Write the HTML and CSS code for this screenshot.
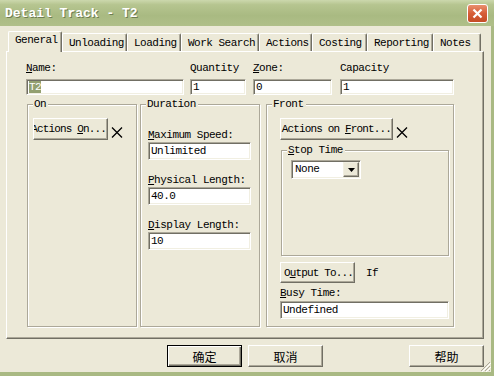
FILE: index.html
```html
<!DOCTYPE html>
<html lang="en">
	<head>
		<meta charset="UTF-8" />
		<title>Detail Track - T2</title>
		<link rel="stylesheet" href="styles.css">
	</head>
	<body>
		<div class="window">
			<div class="titlebar">
				<span class="title">Detail Track - T2</span>
				<span class="close">
					<svg width="11" height="11" viewBox="0 0 11 11">
						<path d="M1.5 1.5L9.5 9.5M9.5 1.5L1.5 9.5" stroke="#fff" stroke-width="2.2" />
					</svg>
				</span>
			</div>
			<div class="client">
				<div class="tabs">
					<div class="tab active">General</div>
					<div class="tab">Unloading</div>
					<div class="tab">Loading</div>
					<div class="tab">Work Search</div>
					<div class="tab">Actions</div>
					<div class="tab">Costing</div>
					<div class="tab">Reporting</div>
					<div class="tab">Notes</div>
				</div>
				<div class="panel">
					<div class="fields">
						<div class="field field-name">
							<div class="label"><u>N</u>ame:</div>
							<div class="edit"><span class="sel">T2</span></div>
						</div>
						<div class="field field-qty">
							<div class="label">Quantity</div>
							<div class="edit">1</div>
						</div>
						<div class="field field-zone">
							<div class="label"><u>Z</u>one:</div>
							<div class="edit">0</div>
						</div>
						<div class="field field-cap">
							<div class="label">Capacity</div>
							<div class="edit">1</div>
						</div>
					</div>

					<div class="groups">
						<fieldset class="group group-on">
							<legend>On</legend>
							<div class="action-row on-body">
								<div class="btn btn-clip btn-on"><span>Actions <u>O</u>n...</span></div>
								<svg class="xmark" width="12" height="11" viewBox="0 0 12 11">
									<path d="M1 0.5L11 10.5M11 0.5L1 10.5" stroke="#000" stroke-width="1.3" />
								</svg>
							</div>
						</fieldset>

						<fieldset class="group group-duration">
							<legend>Duration</legend>
							<div class="stack">
								<div class="label"><u>M</u>aximum Speed:</div>
								<div class="edit">Unlimited</div>
								<div class="label"><u>P</u>hysical Length:</div>
								<div class="edit">40.0</div>
								<div class="label"><u>D</u>isplay Length:</div>
								<div class="edit">10</div>
							</div>
						</fieldset>

						<fieldset class="group group-front">
							<legend>Front</legend>
							<div class="front-body">
								<div class="action-row">
									<div class="btn btn-clip btn-front"><span>Actions on <u>F</u>ront...</span></div>
									<svg class="xmark" width="12" height="11" viewBox="0 0 12 11">
										<path d="M1 0.5L11 10.5M11 0.5L1 10.5" stroke="#000" stroke-width="1.3" />
									</svg>
								</div>
								<fieldset class="group group-stop">
									<legend><u>S</u>top Time</legend>
									<div class="stop-body">
										<div class="select">
											<span class="select-value">None</span>
											<span class="select-arrow">
												<svg width="7" height="4" viewBox="0 0 7 4"><path d="M0 0H7L3.5 4Z" fill="#000" /></svg>
											</span>
										</div>
									</div>
								</fieldset>
								<div class="output-row">
									<div class="btn btn-clip btn-output"><span>O<u>u</u>tput To...</span></div>
									<span class="if">If</span>
								</div>
								<div class="label busy-label"><u>B</u>usy Time:</div>
								<div class="edit busy-edit">Undefined</div>
							</div>
						</fieldset>
					</div>
				</div>

				<div class="footer">
					<div class="btn btn-footer btn-default">确定</div>
					<div class="btn btn-footer">取消</div>
					<div class="btn btn-footer btn-help">帮助</div>
				</div>

				<svg class="grip" width="12" height="12" viewBox="0 0 12 12">
					<path d="M11 2L2 11M11 6L6 11M11 10L10 11" stroke="#aca899" stroke-width="1" />
					<path d="M12 3L3 12M12 7L7 12" stroke="#fff" stroke-width="1" />
				</svg>
			</div>
		</div>
	</body>
</html>
```

FILE: styles.css
```css
body {
	margin: 0;
	background: #ece9d8;
	font-family: "Liberation Mono", "DejaVu Sans Mono", monospace;
	font-size: 11px;
	letter-spacing: -0.5px;
	color: #000;
}

.window {
	width: 494px;
	height: 376px;
	display: flex;
	flex-direction: column;
}

.titlebar {
	flex: none;
	height: 26px;
	box-sizing: border-box;
	display: flex;
	align-items: center;
	justify-content: space-between;
	padding: 0 6px 0 5px;
	background: linear-gradient(to bottom, #ccd8ad 0%, #b6c590 18%, #a9ba82 60%, #b0bf89 100%);
}

.title {
	font-weight: bold;
	font-size: 13px;
	letter-spacing: 0;
	color: #fff;
	text-shadow: 1px 1px 0 #6f7d52;
}

.close {
	width: 21px;
	height: 19px;
	box-sizing: border-box;
	border: 1px solid #fff;
	border-radius: 3px;
	background: linear-gradient(to bottom, #e9906e, #d65d37 50%, #c54c26);
	display: flex;
	align-items: center;
	justify-content: center;
}

.client {
	position: relative;
	flex: 1;
	display: flex;
	flex-direction: column;
	padding: 5px 7px 0 6px;
	border-right: 3px solid #a9b983;
	border-bottom: 4px solid #a9b983;
}

/* tabs */

.tabs {
	display: flex;
	align-items: flex-end;
	height: 20px;
	padding-left: 2px;
}

.tab {
	height: 18px;
	box-sizing: border-box;
	padding: 3px 0 0 6px;
	line-height: 12px;
	white-space: nowrap;
	border-top: 1px solid #fff;
	border-left: 1px solid #fff;
	border-right: 1px solid #716f64;
	border-radius: 2px 2px 0 0;
	box-shadow: inset -1px 0 0 #aca899;
}

.tab.active {
	position: relative;
	z-index: 1;
	height: 21px;
	margin-bottom: -1px;
	padding-top: 2px;
	background: #ece9d8;
}

.tab:nth-child(1) { width: 54px; }
.tab:nth-child(2) { width: 65px; }
.tab:nth-child(3) { width: 54px; }
.tab:nth-child(4) { width: 78px; }
.tab:nth-child(5) { width: 53px; }
.tab:nth-child(6) { width: 55px; }
.tab:nth-child(7) { width: 66px; }
.tab:nth-child(8) { width: 48px; }

.panel {
	height: 288px;
	box-sizing: border-box;
	padding: 10px 0 0 19px;
	border-top: 1px solid #fff;
	border-left: 1px solid #fff;
	border-right: 1px solid #716f64;
	border-bottom: 1px solid #716f64;
	box-shadow: inset -1px -1px 0 #aca899;
}

/* fields */

.label {
	height: 12px;
	line-height: 12px;
	white-space: nowrap;
}

.edit {
	height: 18px;
	box-sizing: border-box;
	padding: 0 2px;
	line-height: 16px;
	white-space: nowrap;
	overflow: hidden;
	background: #fff;
	border: 1px solid;
	border-color: #aca899 #fff #fff #aca899;
	box-shadow: inset 1px 1px 0 #716f64, inset -1px -1px 0 #f1efe2;
}

.fields {
	display: flex;
}

.fields .label {
	height: 11px;
	overflow: hidden;
}

.fields .edit {
	height: 16px;
	line-height: 14px;
	margin-top: 6px;
}

.field-name { width: 158px; }
.field-qty { width: 56px; margin-left: 6px; }
.field-zone { width: 79px; margin-left: 7px; }
.field-cap { width: 114px; margin-left: 8px; }

.sel {
	background: #93a070;
	color: #fff;
}

/* group boxes */

.groups {
	display: flex;
	margin: 3px 0 0 1px;
}

.group {
	margin: 0;
	padding: 0;
	min-width: 0;
	box-sizing: border-box;
	border: 1px solid #aca899;
	box-shadow: inset 1px 1px 0 #fff, 1px 1px 0 #fff;
}

.group legend {
	margin-left: 5px;
	padding: 0 2px 0 1px;
	line-height: 12px;
	background: #ece9d8;
}

.group-on { width: 110px; height: 229px; }
.group-duration { width: 120px; height: 229px; margin-left: 3px; }
.group-front { width: 188px; height: 229px; margin-left: 6px; }

.btn {
	height: 22px;
	box-sizing: border-box;
	display: flex;
	align-items: center;
	justify-content: center;
	white-space: nowrap;
	overflow: hidden;
	background: #ece9d8;
	border: 1px solid;
	border-color: #fff #716f64 #716f64 #fff;
	box-shadow: inset -1px -1px 0 #aca899;
}

.btn-clip {
	justify-content: flex-end;
	padding-right: 1px;
	letter-spacing: -0.85px;
}

.action-row {
	display: flex;
}

.on-body {
	padding: 8px 0 0 5px;
}

.btn-on { width: 75px; }

.xmark {
	margin: 9px 0 0 3px;
}

.stack {
	padding: 19px 8px 0 7px;
}

.stack .edit {
	margin-top: 1px;
}

.stack .edit + .label {
	margin-top: 14px;
}

.front-body {
	padding: 8px 4px 0 13px;
}

.btn-front { width: 113px; }

.group-stop {
	width: 168px;
	height: 112px;
	margin: 4px 0 0 1px;
}

.stop-body {
	padding: 4px 0 0 9px;
}

.select {
	width: 70px;
	height: 19px;
	box-sizing: border-box;
	display: flex;
	padding: 1px;
	background: #fff;
	border: 1px solid;
	border-color: #aca899 #fff #fff #aca899;
	box-shadow: inset 1px 1px 0 #716f64, inset -1px -1px 0 #f1efe2;
}

.select-value {
	flex: 1;
	padding-left: 2px;
	line-height: 15px;
}

.select-arrow {
	width: 16px;
	height: 15px;
	box-sizing: border-box;
	display: flex;
	align-items: center;
	justify-content: center;
	background: #ece9d8;
	border: 1px solid;
	border-color: #f1efe2 #716f64 #716f64 #f1efe2;
	box-shadow: inset -1px -1px 0 #aca899;
}

.output-row {
	display: flex;
	align-items: center;
	margin-top: 6px;
}

.btn-output {
	width: 75px;
	height: 21px;
}

.if {
	margin-left: 11px;
}

.busy-label {
	margin-top: 4px;
}

.busy-edit {
	margin-top: 2px;
}

/* dialog buttons */

.footer {
	display: flex;
	gap: 6px;
	padding: 6px 0 0 161px;
}

.btn-footer {
	width: 75px;
	font-family: "Noto Sans CJK SC", sans-serif;
	font-size: 12px;
	letter-spacing: 0;
}

.btn-default {
	border: 1px solid #000;
	box-shadow: inset 1px 1px 0 #fff, inset -1px -1px 0 #716f64, inset -2px -2px 0 #aca899;
}

.btn-help {
	margin-left: auto;
}

.grip {
	position: absolute;
	right: 0;
	bottom: 0;
}
```
